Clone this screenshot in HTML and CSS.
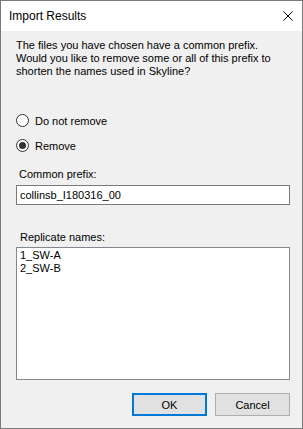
FILE: index.html
```html
<!DOCTYPE html>
<html>
<head>
<meta charset="utf-8">
<link rel="stylesheet" href="styles.css">
</head>
<body>
<div class="window">
  <div class="titlebar">
    <span class="title">Import Results</span>
    <svg class="close" width="10" height="10" viewBox="0 0 10 10"><path d="M0.5 0.5 L9.5 9.5 M9.5 0.5 L0.5 9.5" stroke="#000" stroke-width="1" fill="none"/></svg>
  </div>
  <div class="content">
    <p class="intro">The files you have chosen have a common prefix.<br>Would you like to remove some or all of this prefix to<br>shorten the names used in Skyline?</p>
    <div class="radios">
      <label class="radio"><span class="circle"></span><span>Do not remove</span></label>
      <label class="radio"><span class="circle checked"></span><span>Remove</span></label>
    </div>
    <div class="label prefix-label">Common prefix:</div>
    <div class="textbox">collinsb_I180316_00</div>
    <div class="label names-label">Replicate names:</div>
    <div class="listbox">
      <div>1_SW-A</div>
      <div>2_SW-B</div>
    </div>
    <div class="buttons">
      <div class="btn default">OK</div>
      <div class="btn">Cancel</div>
    </div>
  </div>
</div>
</body>
</html>
```
FILE: styles.css
```css
html, body {
  margin: 0;
  padding: 0;
}
body {
  font-family: "Liberation Sans", Arial, sans-serif;
  font-size: 11px;
  color: #000;
}
.window {
  width: 303px;
  height: 429px;
  box-sizing: border-box;
  border: 1px solid #7a7a7a;
  background: #f0f0f0;
  display: flex;
  flex-direction: column;
}
.titlebar {
  height: 30px;
  background: #fff;
  display: flex;
  align-items: center;
  justify-content: space-between;
  padding: 0 9px 0 8px;
}
.title {
  font-size: 12px;
  line-height: 16px;
}
.close {
  display: block;
}
.content {
  padding: 0 12px 0 15px;
  display: flex;
  flex-direction: column;
}
.intro {
  margin: 8px 0 0 0;
  line-height: 13px;
}
.radios {
  margin-top: 34px;
  display: flex;
  flex-direction: column;
  gap: 8px;
}
.radio {
  display: flex;
  align-items: center;
  height: 17px;
  gap: 6px;
}
.circle {
  width: 13px;
  height: 13px;
  box-sizing: border-box;
  border: 1px solid #333;
  border-radius: 50%;
  background: #fff;
  display: flex;
  align-items: center;
  justify-content: center;
}
.circle.checked::after {
  content: "";
  width: 7px;
  height: 7px;
  border-radius: 50%;
  background: #333;
}
.label {
  line-height: 13px;
}
.prefix-label {
  margin-top: 14px;
  padding-left: 3px;
}
.textbox {
  margin-top: 4px;
  height: 20px;
  box-sizing: border-box;
  border: 1px solid #7a7a7a;
  background: #fff;
  padding: 0 3px;
  line-height: 18px;
}
.names-label {
  margin-top: 26px;
  padding-left: 4px;
}
.listbox {
  margin-top: 3px;
  height: 133px;
  box-sizing: border-box;
  border: 1px solid #828790;
  background: #fff;
  padding: 1px 3px;
  line-height: 13px;
}
.buttons {
  margin-top: 13px;
  display: flex;
  justify-content: flex-end;
  gap: 8px;
}
.btn {
  width: 75px;
  height: 23px;
  box-sizing: border-box;
  border: 1px solid #adadad;
  background: #e1e1e1;
  display: flex;
  align-items: center;
  justify-content: center;
}
.btn.default {
  border: 2px solid #0078d7;
}
```
